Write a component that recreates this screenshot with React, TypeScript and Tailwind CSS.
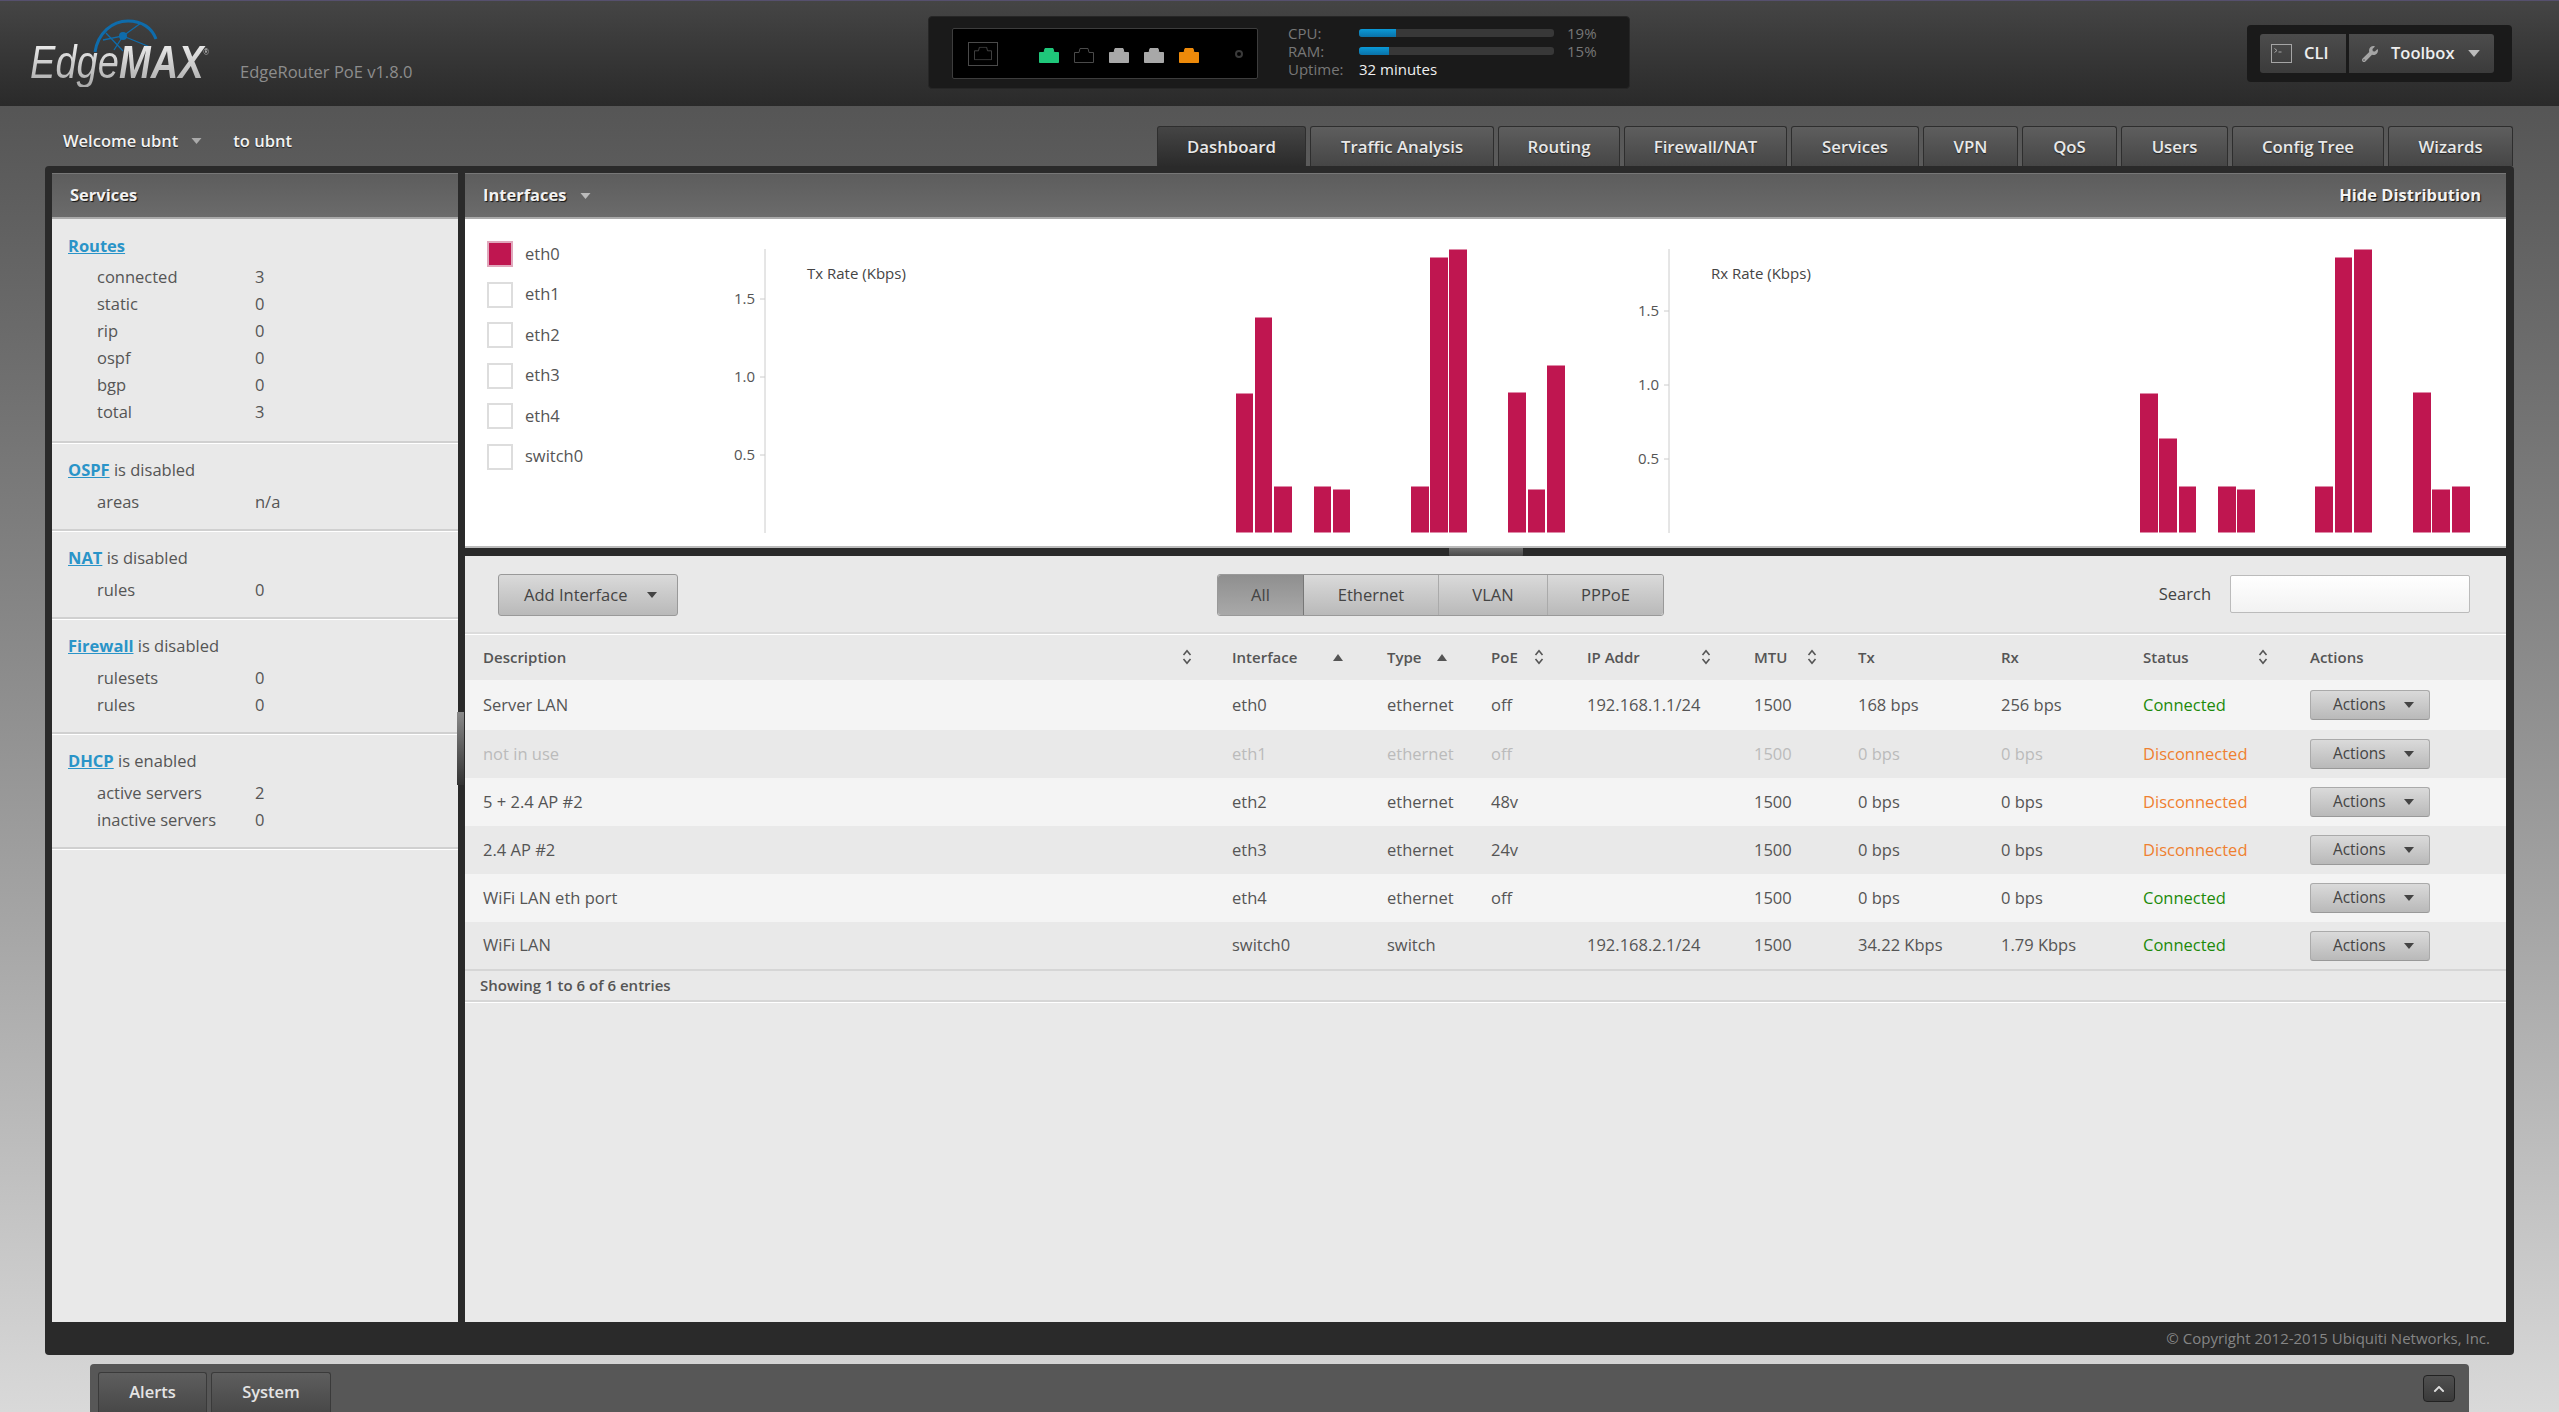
import React from "react";
import { FaWrench, FaChevronUp } from "react-icons/fa";

const tabs = [
  { label: "Dashboard", w: "w-[149px]", active: true },
  { label: "Traffic Analysis", w: "w-[184px]" },
  { label: "Routing", w: "w-[122px]" },
  { label: "Firewall/NAT", w: "w-[163px]" },
  { label: "Services", w: "w-[128px]" },
  { label: "VPN", w: "w-[95px]" },
  { label: "QoS", w: "w-[95px]" },
  { label: "Users", w: "w-[107px]" },
  { label: "Config Tree", w: "w-[152px]" },
  { label: "Wizards", w: "w-[125px]" },
];

const sections = [
  { name: "OSPF", state: "is disabled", rows: [["areas", "n/a"]] },
  { name: "NAT", state: "is disabled", rows: [["rules", "0"]] },
  { name: "Firewall", state: "is disabled", rows: [["rulesets", "0"], ["rules", "0"]] },
  { name: "DHCP", state: "is enabled", rows: [["active servers", "2"], ["inactive servers", "0"]] },
];

const routes = [
  ["connected", "3"],
  ["static", "0"],
  ["rip", "0"],
  ["ospf", "0"],
  ["bgp", "0"],
  ["total", "3"],
];

const ifaces = [
  ["Server LAN", "eth0", "ethernet", "off", "192.168.1.1/24", "1500", "168 bps", "256 bps", "Connected"],
  ["not in use", "eth1", "ethernet", "off", "", "1500", "0 bps", "0 bps", "Disconnected"],
  ["5 + 2.4 AP #2", "eth2", "ethernet", "48v", "", "1500", "0 bps", "0 bps", "Disconnected"],
  ["2.4 AP #2", "eth3", "ethernet", "24v", "", "1500", "0 bps", "0 bps", "Disconnected"],
  ["WiFi LAN eth port", "eth4", "ethernet", "off", "", "1500", "0 bps", "0 bps", "Connected"],
  ["WiFi LAN", "switch0", "switch", "", "192.168.2.1/24", "1500", "34.22 Kbps", "1.79 Kbps", "Connected"],
];

const rowHeights = ["h-[50px]", "h-[48px]", "h-[48px]", "h-[48px]", "h-[48px]", "h-[47px]"];

const tableCols =
  "grid grid-cols-[749px_155px_104px_96px_167px_104px_143px_142px_167px_214px] items-center";

// x start, width, top
const txBars = [
  [1236, 17, 393], [1255, 17, 317], [1274, 18, 486], [1314, 17, 486], [1333, 17, 489],
  [1411, 18, 486], [1430, 18, 257], [1449, 18, 249], [1508, 18, 392], [1528, 17, 489], [1547, 18, 365],
];
const rxBars = [
  [2140, 18, 393], [2159, 18, 438], [2179, 17, 486], [2218, 18, 486], [2237, 18, 489],
  [2315, 18, 486], [2335, 17, 257], [2354, 18, 249], [2413, 18, 392], [2432, 18, 489], [2452, 18, 486],
];

const Caret = ({ className }: { className: string }) => (
  <svg viewBox="0 0 10 6" className={className} fill="currentColor">
    <path d="M0 0h10L5 6z" />
  </svg>
);

const SortBoth = () => (
  <svg viewBox="0 0 10 16" className="w-[10px] h-[16px] text-[#555]" fill="none" stroke="currentColor" strokeWidth="1.6">
    <path d="M1.5 6 5 1.8 8.5 6M1.5 10 5 14.2 8.5 10" />
  </svg>
);

const SortUp = () => (
  <svg viewBox="0 0 10 7" className="w-[10px] h-[7px] text-[#555]" fill="currentColor">
    <path d="M0 7 5 0l5 7z" />
  </svg>
);

const Port = ({ className, outline }: { className: string; outline?: boolean }) => (
  <svg viewBox="0 0 20 15" className={`w-[20px] h-[15px] ${className}`}>
    <path
      d="M6 .5h8l1 4h4.500v10H.5v-10H5z"
      fill={outline ? "none" : "currentColor"}
      stroke="currentColor"
    />
  </svg>
);

const Chart = ({
  viewBox,
  width,
  axisX,
  ticks,
  title,
  titleX,
  bars,
}: {
  viewBox: string;
  width: string;
  axisX: number;
  ticks: [string, number][];
  title: string;
  titleX: number;
  bars: number[][];
}) => (
  <svg viewBox={viewBox} className={`${width} h-[328px] shrink-0`}>
    <line x1={axisX} x2={axisX} y1={249} y2={533} stroke="#ccc" />
    {ticks.map(([label, y]) => (
      <g key={label}>
        <line x1={axisX - 5} x2={axisX} y1={y} y2={y} stroke="#ccc" />
        <text x={axisX - 10} y={y + 5} textAnchor="end" fontSize="15" fill="#555" fontFamily="'Open Sans', sans-serif">
          {label}
        </text>
      </g>
    ))}
    <text x={titleX} y={279} fontSize="15" fill="#444" fontFamily="'Open Sans', sans-serif">
      {title}
    </text>
    {bars.map(([x, w, top]) => (
      <g key={x}>
        <rect x={x} y={top} width={w} height={533 - top} fill="#bf1650" />
        <rect x={x} y={top} width={w} height={1} fill="#df8aa8" />
        <rect x={x} y={532} width={w} height={1} fill="#df8aa8" />
      </g>
    ))}
  </svg>
);

export default function App() {
  return (
    <div className="relative w-[2559px] h-[1412px] overflow-hidden flex flex-col font-['Open_Sans',sans-serif] text-[16.500px] text-[#555] bg-gradient-to-b from-[#4c4c4c] to-[#d9d9d9]">
      {/* Top bar */}
      <header className="h-[106px] shrink-0 flex items-start border-t border-[#56506e] bg-gradient-to-b from-[#454545] to-[#2a2a2a]">
        <div className="w-[928px] shrink-0 flex items-start">
          <div className="relative w-[240px] h-[90px] shrink-0">
            <svg viewBox="0 0 68 34" className="absolute left-[92px] top-[18px] w-[68px] h-[34px]" fill="none" stroke="#0f6cab">
              <path d="M3 33C6 14 20 2 36 2c14 0 24 7 28 18" strokeWidth="3" />
              <path d="M11 21 31 17 49 4M31 17 22 31M31 17 58 28M14 14 31 32" strokeWidth="1.300" />
              <circle cx="31" cy="17" r="4" fill="#0f6cab" stroke="none" />
            </svg>
            <div className="absolute left-[30px] top-[36px] origin-left scale-x-[.81] whitespace-nowrap font-['Liberation_Sans',sans-serif] italic text-[47px] leading-[50px] text-transparent bg-clip-text bg-gradient-to-b from-[#f6f6f6] to-[#a9a9a9]">
              Edge<span className="font-bold">MAX</span>
              <span className="align-top text-[9px] not-italic leading-[30px]">®</span>
            </div>
          </div>
          <span className="mt-[60px] text-[16.500px] leading-[22px] text-[#8d8d8d] whitespace-nowrap">EdgeRouter PoE v1.8.0</span>
        </div>

        <div className="mt-[15px] w-[702px] h-[73px] shrink-0 flex items-start rounded-[4px] bg-[#1a1a1a] border border-[#262626] pl-[23px]">
          <div className="mt-[11px] w-[306px] h-[51px] shrink-0 flex items-center bg-black border border-[#3d3d3d] rounded-[2px] pl-[15px]">
            <div className="w-[30px] h-[24px] border border-[#4a4a4a] flex items-center justify-center">
              <Port className="text-[#4a4a4a] scale-90" outline />
            </div>
            <div className="ml-[41px] flex gap-[15px] mt-[3px]">
              <Port className="text-[#1fc77a]" />
              <Port className="text-[#4a4a4a]" outline />
              <Port className="text-[#a8a8a8]" />
              <Port className="text-[#a8a8a8]" />
              <Port className="text-[#ee8a0a]" />
            </div>
            <div className="ml-[36px] w-[8px] h-[8px] rounded-full border-2 border-[#3a3a3a]" />
          </div>
          <div className="ml-[30px] mt-[7px] grid grid-cols-[71px_195px_auto] items-center text-[15px] leading-[18px] text-[#777]">
            <span>CPU:</span>
            <div className="h-[8px] rounded-[3px] bg-[#383838] overflow-hidden">
              <div className="h-full w-[37px] bg-gradient-to-b from-[#0a9ad8] to-[#0a72a8]" />
            </div>
            <span className="ml-[13px]">19%</span>
            <span>RAM:</span>
            <div className="h-[8px] rounded-[3px] bg-[#383838] overflow-hidden">
              <div className="h-full w-[30px] bg-gradient-to-b from-[#0a9ad8] to-[#0a72a8]" />
            </div>
            <span className="ml-[13px]">15%</span>
            <span>Uptime:</span>
            <span className="col-span-2 text-[#f0f0f0]">32 minutes</span>
          </div>
        </div>

        <div className="ml-auto mr-[47px] mt-[24px] h-[57px] w-[265px] flex items-center rounded-[4px] bg-[#1a1a1a] pl-[13px]">
          <button className="w-[86px] h-[39px] flex items-center rounded-l-[3px] bg-gradient-to-b from-[#4c4c4c] to-[#3b3b3b] font-semibold text-[16.500px] text-[#eee] pl-[11px] gap-[12px]">
            <svg viewBox="0 0 21 19" className="w-[21px] h-[19px]" fill="none" stroke="#a5a5a5">
              <rect x=".5" y=".5" width="20" height="18" />
              <path d="M3.500 4.500 6 6.500 3.500 8.500M7.500 8h3" />
            </svg>
            CLI
          </button>
          <button className="ml-[3px] w-[145px] h-[39px] flex items-center rounded-r-[3px] bg-gradient-to-b from-[#4c4c4c] to-[#3b3b3b] font-semibold text-[16.500px] text-[#eee] pl-[13px]">
            <FaWrench className="w-[16px] h-[16px] text-[#a5a5a5]" />
            <span className="ml-[13px]">Toolbox</span>
            <Caret className="w-[12px] h-[7px] ml-[13px] text-[#bbb]" />
          </button>
        </div>
      </header>

      {/* Welcome + tabs */}
      <nav className="h-[60px] shrink-0 flex items-start pt-[20px] pl-[63px] pr-[46px]">
        <div className="h-[30px] flex items-center font-semibold text-[16.500px] text-[#f2f2f2] [text-shadow:0_1px_1px_#222]">
          <span>Welcome ubnt</span>
          <Caret className="w-[11px] h-[6px] ml-[13px] text-[#aaa]" />
          <span className="ml-[31px]">to ubnt</span>
        </div>
        <div className="ml-auto flex gap-[4px]">
          {tabs.map((t) => (
            <div
              key={t.label}
              className={`${t.w} h-[40px] flex items-center justify-center rounded-t-[3px] border border-b-0 border-[#2e2e2e] font-semibold text-[16.800px] text-[#e8e8e8] [text-shadow:0_1px_1px_#222] ${
                t.active ? "bg-gradient-to-b from-[#454545] to-[#2b2b2b]" : "bg-gradient-to-b from-[#5e5e5e] to-[#464646]"
              }`}
            >
              {t.label}
            </div>
          ))}
        </div>
      </nav>

      {/* Main panel */}
      <main className="relative ml-[45px] w-[2469px] h-[1189px] shrink-0 flex flex-col rounded-[4px] bg-[#2a2a2a] pt-[7px] px-[7px]">
        <div className="flex h-[1149px] shrink-0 gap-[7px]">
          {/* Services */}
          <aside className="w-[406px] shrink-0 flex flex-col bg-[#e9e9e9]">
            <div className="h-[46px] shrink-0 flex items-center pl-[18px] border-t border-b-2 border-t-[#777] border-b-[#aaa] bg-gradient-to-b from-[#5d5d5d] to-[#6b6b6b] font-bold text-[16.500px] text-[#f2f2f2] [text-shadow:1px_1px_1px_#111]">
              Services
            </div>
            <section className="pt-[13px] pb-[16px] pl-[16px] border-b-2 border-[#d0d0d0] shadow-[0_1px_0_#fff] leading-[27px]">
              <a className="font-bold text-[#2a94c8] underline">Routes</a>
              <div className="mt-[4px]">
                {routes.map(([k, v]) => (
                  <div key={k} className="flex h-[27px]">
                    <span className="w-[158px] ml-[29px]">{k}</span>
                    <span>{v}</span>
                  </div>
                ))}
              </div>
            </section>
            {sections.map((s) => (
              <section key={s.name} className="mt-[1px] pt-[12px] pb-[14px] pl-[16px] border-b-2 border-[#d0d0d0] shadow-[0_1px_0_#fff] leading-[27px]">
                <div>
                  <a className="font-bold text-[#2a94c8] underline">{s.name}</a> {s.state}
                </div>
                <div className="mt-[5px]">
                  {s.rows.map(([k, v]) => (
                    <div key={k} className="flex h-[27px]">
                      <span className="w-[158px] ml-[29px]">{k}</span>
                      <span>{v}</span>
                    </div>
                  ))}
                </div>
              </section>
            ))}
          </aside>

          {/* Interfaces */}
          <div className="w-[2041px] shrink-0 flex flex-col">
            <div className="h-[46px] shrink-0 flex items-center justify-between px-[18px] pr-[25px] border-t border-b-2 border-t-[#777] border-b-[#aaa] bg-gradient-to-b from-[#5d5d5d] to-[#6b6b6b] font-bold text-[16.500px] text-[#f2f2f2] [text-shadow:1px_1px_1px_#111]">
              <span className="flex items-center">
                Interfaces
                <Caret className="w-[11px] h-[6px] ml-[13px] text-[#bbb]" />
              </span>
              <span>Hide Distribution</span>
            </div>

            <div className="h-[329px] shrink-0 flex bg-white border-b-2 border-[#bbb]">
              <div className="w-[255px] shrink-0 pt-[15px] pl-[22px]">
                {["eth0", "eth1", "eth2", "eth3", "eth4", "switch0"].map((name, i) => (
                  <div key={name} className="h-[40.500px] flex items-center gap-[12px]">
                    <div className={`w-[26px] h-[26px] border-2 ${i === 0 ? "bg-[#bf1650] border-[#e0a8bc]" : "bg-white border-[#ddd]"}`} />
                    {name}
                  </div>
                ))}
              </div>
              <Chart
                viewBox="720 219 900 328"
                width="w-[900px]"
                axisX={765}
                ticks={[["1.5", 299], ["1.0", 377], ["0.5", 455]]}
                title="Tx Rate (Kbps)"
                titleX={807}
                bars={txBars}
              />
              <Chart
                viewBox="1620 219 886 328"
                width="w-[886px]"
                axisX={1669}
                ticks={[["1.5", 311], ["1.0", 385], ["0.5", 459]]}
                title="Rx Rate (Kbps)"
                titleX={1711}
                bars={rxBars}
              />
            </div>

            <div className="h-[8px] shrink-0 flex justify-center">
              <div className="w-[74px] h-full rounded-b-[1px] bg-gradient-to-b from-[#6e6e6e] to-[#4a4a4a]" />
            </div>

            <div className="flex-1 bg-[#e9e9e9] flex flex-col">
              <div className="h-[78px] shrink-0 flex items-start pt-[18px] pl-[33px] pr-[36px] border-b-2 border-[#dcdcdc] shadow-[0_1px_0_#fff]">
                <button className="w-[180px] h-[42px] flex items-center gap-[20px] pl-[25px] rounded-[3px] border border-[#999] bg-gradient-to-b from-[#dadada] to-[#b9b9b9] text-[#444] shrink-0">
                  Add Interface
                  <Caret className="w-[10px] h-[6px] text-[#444]" />
                </button>
                <div className="ml-[539px] h-[42px] flex rounded-[3px] border border-[#999] shrink-0 text-[#444]">
                  <div className="w-[86px] flex items-center justify-center rounded-l-[3px] bg-gradient-to-b from-[#8f8f8f] to-[#a9a9a9] border-r border-[#777]">All</div>
                  <div className="w-[135px] flex items-center justify-center bg-gradient-to-b from-[#dadada] to-[#b9b9b9] border-r border-[#aaa]">Ethernet</div>
                  <div className="w-[109px] flex items-center justify-center bg-gradient-to-b from-[#dadada] to-[#b9b9b9] border-r border-[#aaa]">VLAN</div>
                  <div className="w-[115px] flex items-center justify-center rounded-r-[3px] bg-gradient-to-b from-[#dadada] to-[#b9b9b9]">PPPoE</div>
                </div>
                <div className="ml-auto flex items-center h-[40px] text-[#444]">
                  <span className="mr-[19px]">Search</span>
                  <input className="w-[240px] h-[38px] rounded-[2px] border border-[#bbb] bg-gradient-to-b from-white to-[#f2f2f2]" />
                </div>
              </div>

              <div className={`${tableCols} h-[46px] shrink-0 text-[15px] font-semibold text-[#555]`}>
                <div className="pl-[18px] pr-[22px] flex items-center justify-between">Description<SortBoth /></div>
                <div className="pl-[18px] pr-[26px] flex items-center justify-between">Interface<SortUp /></div>
                <div className="pl-[18px] pr-[26px] flex items-center justify-between">Type<SortUp /></div>
                <div className="pl-[18px] pr-[25px] flex items-center justify-between">PoE<SortBoth /></div>
                <div className="pl-[18px] pr-[25px] flex items-center justify-between">IP Addr<SortBoth /></div>
                <div className="pl-[18px] pr-[23px] flex items-center justify-between">MTU<SortBoth /></div>
                <div className="pl-[18px]">Tx</div>
                <div className="pl-[18px]">Rx</div>
                <div className="pl-[18px] pr-[24px] flex items-center justify-between">Status<SortBoth /></div>
                <div className="pl-[18px]">Actions</div>
              </div>

              {ifaces.map((row, i) => {
                const status = row[8];
                const muted = row[0] === "not in use";
                return (
                  <div
                    key={row[1]}
                    className={`${tableCols} ${rowHeights[i]} shrink-0 ${i % 2 === 0 ? "bg-[#f4f4f4]" : "bg-[#e9e9e9]"} ${muted ? "text-[#bbb]" : "text-[#555]"}`}
                  >
                    {row.slice(0, 8).map((cell, j) => (
                      <div key={j} className="pl-[18px] whitespace-nowrap">{cell}</div>
                    ))}
                    <div className={`pl-[18px] ${status === "Connected" ? "text-[#1c8a0a]" : "text-[#ef8030]"}`}>{status}</div>
                    <div className="pl-[18px]">
                      <button className="w-[120px] h-[30px] flex items-center justify-between pl-[22px] pr-[15px] rounded-[3px] border border-[#aaa] border-b-[#999] bg-gradient-to-b from-[#dadada] to-[#b9b9b9] text-[15.400px] text-[#444]">
                        Actions
                        <Caret className="w-[10px] h-[6px] text-[#444]" />
                      </button>
                    </div>
                  </div>
                );
              })}

              <div className="h-[33px] shrink-0 flex items-center pl-[15px] border-t-2 border-b-2 border-t-[#d6d6d6] border-b-[#d6d6d6] shadow-[0_1px_0_#fff] font-semibold text-[15px] text-[#555]">
                Showing 1 to 6 of 6 entries
              </div>
            </div>
          </div>
        </div>

        <div className="h-[33px] shrink-0 flex items-center justify-end pr-[17px] text-[15px] text-[#858585]">
          © Copyright 2012-2015 Ubiquiti Networks, Inc.
        </div>

        {/* handle on the divider */}
        <div className="absolute left-[412px] top-[546px] w-[7px] h-[73px] bg-gradient-to-b from-[#8a8a8a] to-[#333]" />
      </main>

      {/* Bottom drawer */}
      <footer className="ml-[90px] mt-[9px] w-[2379px] flex-1 flex items-start rounded-t-[4px] bg-[#575757] pt-[8px] pl-[8px] pr-[14px]">
        <div className="flex gap-[4px] font-semibold text-[16.500px] text-[#e4e4e4]">
          <div className="w-[109px] h-[40px] flex items-center justify-center rounded-t-[3px] border border-b-0 border-[#3a3a3a] bg-gradient-to-b from-[#5e5e5e] to-[#484848]">Alerts</div>
          <div className="w-[120px] h-[40px] flex items-center justify-center rounded-t-[3px] border border-b-0 border-[#3a3a3a] bg-gradient-to-b from-[#5e5e5e] to-[#484848]">System</div>
        </div>
        <button className="ml-auto mt-[3px] w-[32px] h-[27px] flex items-center justify-center rounded-[4px] border border-[#222] bg-gradient-to-b from-[#505050] to-[#3a3a3a] text-[#ddd]">
          <FaChevronUp className="w-[12px] h-[12px]" />
        </button>
      </footer>
    </div>
  );
}
